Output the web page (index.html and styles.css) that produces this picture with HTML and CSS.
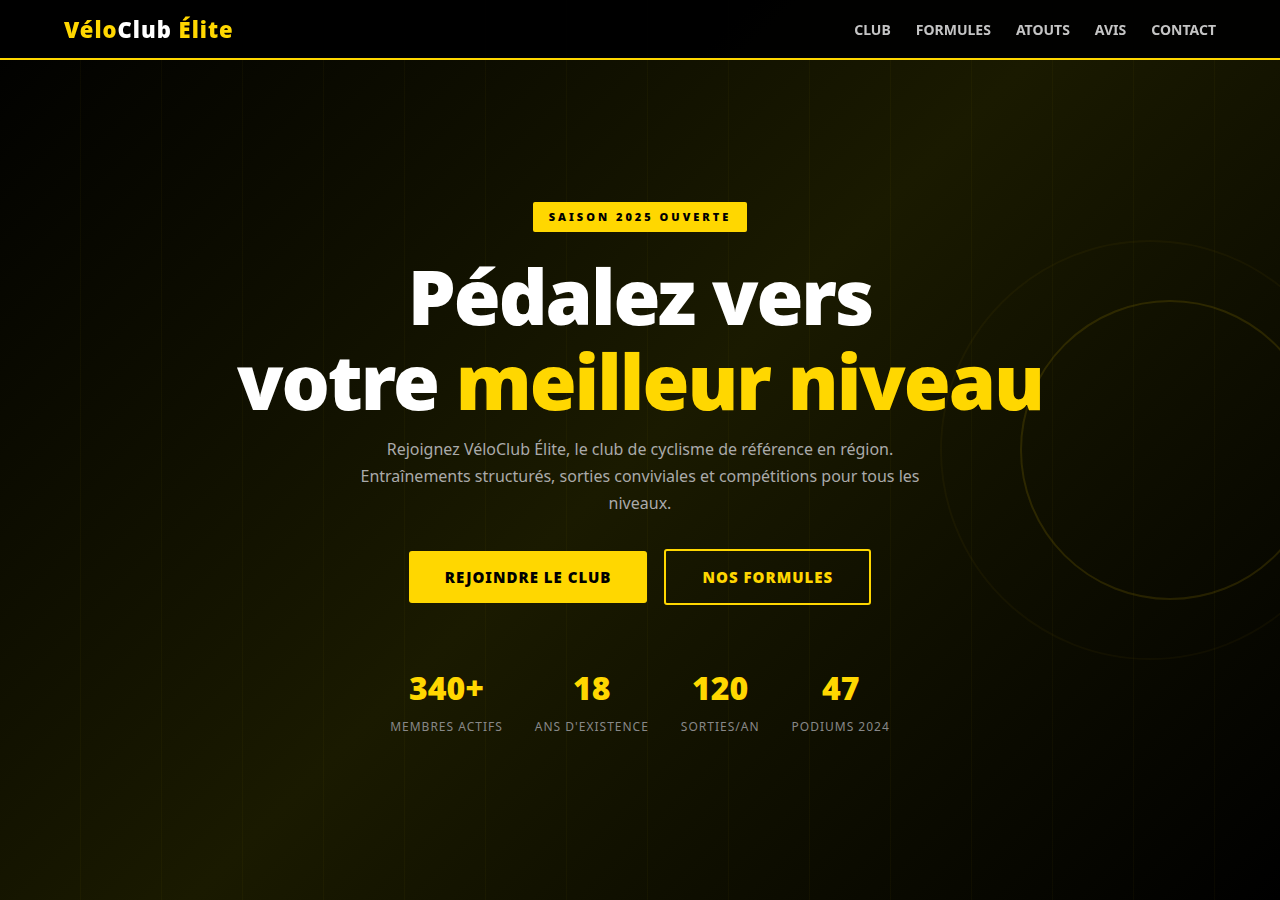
FILE: index.html
```
<!DOCTYPE html>
<html lang="fr">
<head>
    <meta charset="UTF-8">
    <meta name="viewport" content="width=device-width, initial-scale=1.0">
    <title>VéloClub Élite</title>
    <link rel="stylesheet" href="styles.css">
</head>
<body>
    <!-- Navigation -->
    <nav class="navbar">
        <a href="#accueil" class="logo">Vélo<span>Club</span> Élite</a>
        <ul class="nav-links">
            <li><a href="#club">Club</a></li>
            <li><a href="#formules">Formules</a></li>
            <li><a href="#atouts">Atouts</a></li>
            <li><a href="#avis">Avis</a></li>
            <li><a href="#contact">Contact</a></li>
        </ul>
    </nav>

    <!-- Hero -->
    <section class="hero" id="accueil">
        <div class="wheel wheel-inner"></div>
        <div class="wheel wheel-outer"></div>
        <div class="hero-content">
            <div class="hero-badge">Saison 2025 ouverte</div>
            <h1>Pédalez vers<br>votre <span>meilleur niveau</span></h1>
            <p class="hero-text">Rejoignez VéloClub Élite, le club de cyclisme de référence en région. Entraînements structurés, sorties conviviales et compétitions pour tous les niveaux.</p>
            <div class="hero-buttons">
                <a href="#contact" class="btn btn-primary">Rejoindre le club</a>
                <a href="#formules" class="btn btn-outline">Nos formules</a>
            </div>
            <div class="hero-stats">
                <div class="stat">
                    <div class="stat-number">340+</div>
                    <div class="stat-label">Membres actifs</div>
                </div>
                <div class="stat">
                    <div class="stat-number">18</div>
                    <div class="stat-label">Ans d'existence</div>
                </div>
                <div class="stat">
                    <div class="stat-number">120</div>
                    <div class="stat-label">Sorties/an</div>
                </div>
                <div class="stat">
                    <div class="stat-number">47</div>
                    <div class="stat-label">Podiums 2024</div>
                </div>
            </div>
        </div>
    </section>
</body>
</html>
```
FILE: styles.css
```
* {
    margin: 0;
    padding: 0;
    box-sizing: border-box;
}
body {
    font-family: "Segoe UI", "Noto Sans", sans-serif;
    background: #000;
    color: #fff;
}
a {
    text-decoration: none;
}

/* Navigation */
.navbar {
    position: fixed;
    top: 0;
    left: 0;
    right: 0;
    z-index: 10;
    height: 60px;
    padding: 0 5%;
    display: flex;
    justify-content: space-between;
    align-items: center;
    background: rgba(0, 0, 0, 0.95);
    border-bottom: 2px solid #ffd700;
}
.logo {
    font-size: 22px;
    font-weight: 900;
    letter-spacing: 1px;
    color: #ffd700;
}
.logo span {
    color: #fff;
}
.nav-links {
    display: flex;
    gap: 25px;
    list-style: none;
}
.nav-links a {
    font-size: 14px;
    font-weight: 700;
    text-transform: uppercase;
    color: #c4c4c4;
}

/* Hero */
.hero {
    position: relative;
    overflow: hidden;
    min-height: 100vh;
    padding: 78px 5% 40px;
    display: flex;
    justify-content: center;
    align-items: center;
    text-align: center;
    background:
        repeating-linear-gradient(90deg, transparent 0, transparent 80px, rgba(255, 215, 0, 0.03) 80px, rgba(255, 215, 0, 0.03) 81px),
        linear-gradient(135deg, #000 0%, #1a1a00 50%, #000 100%);
}
.wheel {
    position: absolute;
    top: 50%;
    transform: translateY(-50%);
    border: 2px solid #ffd700;
    border-radius: 50%;
}
.wheel-inner {
    right: -40px;
    width: 300px;
    height: 300px;
    opacity: 0.12;
}
.wheel-outer {
    right: -80px;
    width: 420px;
    height: 420px;
    opacity: 0.04;
}
.hero-content {
    position: relative;
}
.hero-badge {
    display: inline-block;
    padding: 6px 16px;
    margin-bottom: 21px;
    border-radius: 2px;
    background: #ffd700;
    color: #000;
    font-size: 11px;
    line-height: 18px;
    font-weight: 900;
    letter-spacing: 3px;
    text-transform: uppercase;
}
.hero h1 {
    margin-bottom: 13px;
    font-size: 76px;
    line-height: 85px;
    font-weight: 900;
    letter-spacing: -2px;
}
.hero h1 span {
    color: #ffd700;
}
.hero-text {
    max-width: 560px;
    margin: 0 auto 32px;
    font-size: 16px;
    line-height: 27px;
    color: #aaa;
}
.hero-buttons {
    display: flex;
    justify-content: center;
    align-items: center;
    flex-wrap: wrap;
    gap: 17px;
}
.btn {
    padding: 16px 36px;
    border-radius: 3px;
    font-size: 15px;
    line-height: 20px;
    font-weight: 900;
    letter-spacing: 1px;
    text-transform: uppercase;
}
.btn-primary {
    background: #ffd700;
    color: #000;
}
.btn-outline {
    border: 2px solid #ffd700;
    color: #ffd700;
}
.hero-stats {
    display: flex;
    justify-content: center;
    flex-wrap: wrap;
    gap: 32px;
    margin-top: 62px;
}
.stat-number {
    font-size: 32px;
    line-height: 42px;
    font-weight: 900;
    color: #ffd700;
}
.stat-label {
    margin-top: 8px;
    font-size: 12px;
    line-height: 20px;
    letter-spacing: 1px;
    text-transform: uppercase;
    color: #888;
}
```
